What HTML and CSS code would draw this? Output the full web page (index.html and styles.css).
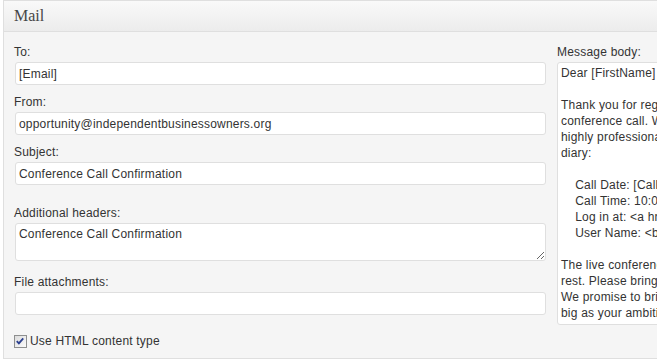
FILE: index.html
```html
<!DOCTYPE html>
<html lang="en">
<head>
  <meta charset="UTF-8" />
  <title>Mail</title>
  <link rel="stylesheet" href="styles.css">
</head>
<body>
  <div class="postbox">
    <h3 class="hndle">Mail</h3>
    <div class="inside">
      <div class="fields">
        <div class="field f-to">
          <label for="mail-recipient">To:</label>
          <input type="text" id="mail-recipient" class="wide" value="[Email]" />
        </div>
        <div class="field f-from">
          <label for="mail-sender">From:</label>
          <input type="text" id="mail-sender" class="wide" value="opportunity@independentbusinessowners.org" />
        </div>
        <div class="field f-subject">
          <label for="mail-subject">Subject:</label>
          <input type="text" id="mail-subject" class="wide" value="Conference Call Confirmation" />
        </div>
        <div class="field f-headers">
          <label for="mail-headers">Additional headers:</label>
          <textarea id="mail-headers" class="wide headers" rows="2">Conference Call Confirmation</textarea>
        </div>
        <div class="field f-attach">
          <label for="mail-attachments">File attachments:</label>
          <input type="text" id="mail-attachments" class="wide" value="" />
        </div>
        <div class="field f-html">
          <span class="check" aria-hidden="true">
            <svg width="13" height="13" viewBox="0 0 13 13">
              <path d="M3 6.2 L5.3 8.6 L10 3.2" fill="none" stroke="#2a3f8f" stroke-width="2" />
            </svg>
          </span>
          <span class="check-label">Use HTML content type</span>
        </div>
      </div>

      <div class="body-col">
        <label for="mail-body">Message body:</label>
        <textarea id="mail-body" class="message" wrap="off">Dear [FirstName]

Thank you for registering for our live
conference call. We look forward to a
highly professional session. Please note the following in your
diary:

    Call Date: [Call Date]
    Call Time: 10:00 GMT
    Log in at: &lt;a href="#"&gt;click here&lt;/a&gt;
    User Name: &lt;b&gt;[Email]&lt;/b&gt;

The live conference will be limited to the
rest. Please bring your questions.
We promise to bring the answers
big as your ambitions.</textarea>
      </div>
    </div>
  </div>
</body>
</html>
```

FILE: styles.css
```css
body { margin: 0; background: #fff; font-family: "Liberation Sans", Arial, sans-serif; font-size: 12px; letter-spacing: 0.2px; color: #333; }

.postbox { margin-left: 3px; width: 654px; height: 359px; box-sizing: border-box; border: 1px solid #dfdfdf; border-right: none; background: #f5f5f5; overflow: hidden; }
.hndle { margin: 0; height: 30px; line-height: 30px; padding-left: 10px; border-bottom: 1px solid #dfdfdf; background: linear-gradient(#f9f9f9, #ececec); font-family: "Liberation Serif", Georgia, serif; font-size: 16px; font-weight: normal; letter-spacing: 0; color: #464646; }

.inside { display: grid; grid-template-columns: 532px 300px; column-gap: 11px; padding: 13px 0 0 10px; }

.field label, .body-col label { display: block; line-height: 14px; margin-bottom: 3px; color: #333; }

input.wide, textarea.wide { display: block; width: 531px; margin-left: 1px; box-sizing: border-box; border: 1px solid #dfdfdf; border-radius: 3px; background: #fff; font-family: "Liberation Sans", Arial, sans-serif; font-size: 12px; letter-spacing: 0.2px; color: #333; }
input.wide { height: 23px; padding: 0 3px; }
textarea.headers { height: 38px; padding: 2px 3px; line-height: 16px; resize: vertical; }

.f-from { margin-top: 10px; }
.f-subject { margin-top: 10px; }
.f-headers { margin-top: 21px; }
.f-attach { margin-top: 14px; }
.f-html { margin-top: 19px; display: flex; align-items: center; gap: 3px; }

.check { display: inline-flex; width: 13px; height: 13px; box-sizing: border-box; border: 1px solid #8e8f8f; background: linear-gradient(135deg, #dcdcdc, #fbfbfb); }
.check svg { margin: -1px 0 0 -1px; }
.check-label { line-height: 14px; }

.body-col { display: block; }
textarea.message { display: block; width: 300px; height: 263px; box-sizing: border-box; border: 1px solid #dfdfdf; border-radius: 3px; background: #fff; padding: 2px 3px; font-family: "Liberation Sans", Arial, sans-serif; font-size: 12px; letter-spacing: 0.2px; line-height: 16px; color: #333; white-space: pre; overflow: hidden; resize: none; }
```
